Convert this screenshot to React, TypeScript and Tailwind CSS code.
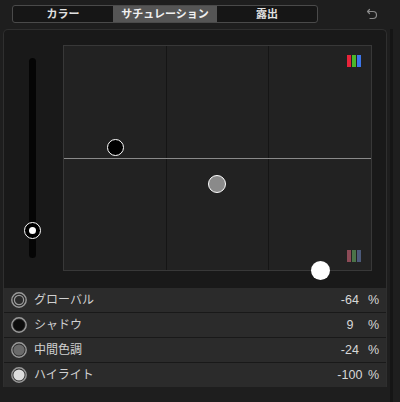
import React from "react";

const font = { fontFamily: '"Liberation Sans", "Noto Sans CJK JP", sans-serif' };

function RowIcon({ kind }: { kind: string }) {
  if (kind === "global")
    return (
      <svg width="16" height="16" viewBox="0 0 16 16">
        <circle cx="8" cy="8" r="7.2" fill="none" stroke="#9a9a9a" strokeWidth="1.4" />
        <circle cx="8" cy="8" r="4.6" fill="none" stroke="#9a9a9a" strokeWidth="1.2" />
      </svg>
    );
  const fill = kind === "shadow" ? "#0c0c0c" : kind === "mid" ? "#6a6a6a" : "#dcdcdc";
  return (
    <svg width="16" height="16" viewBox="0 0 16 16">
      <circle cx="8" cy="8" r="7.2" fill="none" stroke="#9a9a9a" strokeWidth="1.4" />
      <circle cx="8" cy="8" r="5.6" fill={fill} />
    </svg>
  );
}

const rows = [
  { kind: "global", label: "グローバル", value: "-64" },
  { kind: "shadow", label: "シャドウ", value: "9" },
  { kind: "mid", label: "中間色調", value: "-24" },
  { kind: "high", label: "ハイライト", value: "-100" },
];

export default function App() {
  return (
    <div className="w-[400px] h-[402px] bg-[#1e1e1e] overflow-hidden flex" style={font}>
      <div className="flex flex-col w-[390px]">
        {/* top bar */}
        <div className="h-[29px] flex items-start relative">
          <div className="ml-[12px] mt-[5px] w-[306px] h-[18px] flex border border-[#4a4a4a] rounded-[3px] overflow-hidden bg-[#161616]">
            <div className="w-[100px] flex items-center justify-center text-[11px] font-bold text-[#e0e0e0]">カラー</div>
            <div className="w-[104px] flex items-center justify-center text-[11px] font-bold text-[#f0f0f0] bg-[#555555]">サチュレーション</div>
            <div className="flex-1 flex items-center justify-center text-[11px] font-bold text-[#e0e0e0]">露出</div>
          </div>
          <svg className="absolute left-[366px] top-[8px]" width="12" height="12" viewBox="0 0 12 12">
            <path d="M3.5 1.5 L1.5 3.5 L3.5 5.5" fill="none" stroke="#8a8a8a" strokeWidth="1.2" strokeLinecap="round" strokeLinejoin="round" />
            <path d="M1.8 3.5 H7 A3.5 3.5 0 0 1 7 10.5 H4" fill="none" stroke="#8a8a8a" strokeWidth="1.2" strokeLinecap="round" />
          </svg>
        </div>
        {/* panel */}
        <div className="ml-[3px] w-[384px] border-t border-x border-[#2f2f2f] rounded-t-[5px] bg-[#191919] flex flex-col">
          <div className="flex pl-[25px] pt-[15px] pb-[17px]">
            <div className="relative mt-[13px] w-[7px] h-[200px] rounded-full bg-[#050505]">
              <div className="absolute left-[-5px] top-[164px] w-[17px] h-[17px] rounded-full border-[1.5px] border-white bg-black flex items-center justify-center">
                <div className="w-[7px] h-[7px] rounded-full bg-white" />
              </div>
            </div>
            <div className="relative ml-[27px] w-[309px] h-[226px] bg-[#222222] border border-[#383838]">
              <div className="absolute left-[102px] top-0 bottom-0 w-px bg-[#151515]" />
              <div className="absolute left-[204px] top-0 bottom-0 w-px bg-[#151515]" />
              <div className="absolute left-0 right-0 top-[112px] h-px bg-[#8a8a8a]" />
              <div className="absolute right-[10px] top-[9px] flex gap-px">
                <div className="w-[4px] h-[12px] bg-[#e8243a]" />
                <div className="w-[4px] h-[12px] bg-[#4bb82a]" />
                <div className="w-[4px] h-[12px] bg-[#3c76ea]" />
              </div>
              <div className="absolute right-[10px] top-[204px] flex gap-px">
                <div className="w-[4px] h-[12px] bg-[#8c4a56]" />
                <div className="w-[4px] h-[12px] bg-[#4b7349]" />
                <div className="w-[4px] h-[12px] bg-[#4c5a7a]" />
              </div>
              <div className="absolute left-[43px] top-[93px] w-[17px] h-[17px] rounded-full border-[1.5px] border-white bg-black" />
              <div className="absolute left-[144px] top-[129px] w-[18px] h-[18px] rounded-full border-[1.5px] border-white bg-[#8a8a8a]" />
              <div className="absolute left-[247px] top-[215px] w-[19px] h-[19px] rounded-full bg-white" />
            </div>
          </div>
          <div className="flex flex-col gap-px">
            {rows.map((r) => (
              <div key={r.label} className="h-[24px] bg-[#2b2b2b] flex items-center pl-[7px]">
                <RowIcon kind={r.kind} />
                <span className="ml-[7px] text-[12px] text-[#d0d0d0]">{r.label}</span>
                <span className="ml-auto w-[30px] text-center text-[12.5px] text-[#d8d8d8]">{r.value}</span>
                <span className="ml-[3px] mr-[7px] text-[12.5px] text-[#d8d8d8]">%</span>
              </div>
            ))}
          </div>
        </div>
      </div>
      <div className="w-[3px] h-full bg-[#151515] mt-[29px]" />
    </div>
  );
}
